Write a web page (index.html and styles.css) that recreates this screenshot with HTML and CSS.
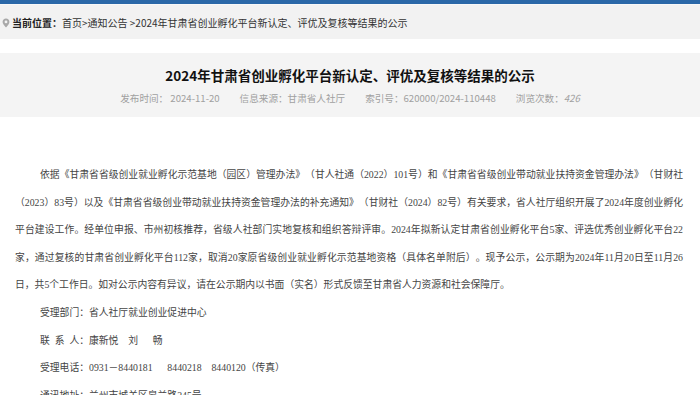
FILE: index.html
```html
<!DOCTYPE html>
<html lang="zh-CN">
<head>
<meta charset="utf-8">
<title>2024年甘肃省创业孵化平台新认定、评优及复核等结果的公示</title>
<link rel="stylesheet" href="styles.css">
</head>
<body>
<div class="topbar"></div>
<div class="crumbs">
  <svg class="pin" width="8" height="10" viewBox="0 0 8 10"><path d="M4 0.6C2 0.6 0.6 2.1 0.6 3.9C0.6 6.2 4 9.4 4 9.4C4 9.4 7.4 6.2 7.4 3.9C7.4 2.1 6 0.6 4 0.6Z" fill="#a8a8a8"/><circle cx="4" cy="3.9" r="1.4" fill="#f2f2f2"/></svg>
  <span class="crumbs-label">当前位置：</span>
  <span class="crumbs-path">首页&gt;通知公告 &gt;2024年甘肃省创业孵化平台新认定、评优及复核等结果的公示</span>
</div>
<div class="headbox">
  <h1 class="title">2024年甘肃省创业孵化平台新认定、评优及复核等结果的公示</h1>
  <div class="meta">
    <span>发布时间：&nbsp;2024-11-20</span>
    <span>信息来源：甘肃省人社厅</span>
    <span>索引号：620000/2024-110448</span>
    <span>浏览次数：<em class="views">426</em></span>
  </div>
</div>
<div class="content">
  <p class="para">依据《甘肃省省级创业就业孵化示范基地（园区）管理办法》（甘人社通（2022）101号）和《甘肃省省级创业带动就业扶持资金管理办法》（甘财社（2023）83号）以及《甘肃省省级创业带动就业扶持资金管理办法的补充通知》（甘财社（2024）82号）有关要求，省人社厅组织开展了2024年度创业孵化平台建设工作。经单位申报、市州初核推荐，省级人社部门实地复核和组织答辩评审。2024年拟新认定甘肃省创业孵化平台5家、评选优秀创业孵化平台22家，通过复核的甘肃省创业孵化平台112家，取消20家原省级创业就业孵化示范基地资格（具体名单附后）。现予公示，公示期为2024年11月20日至11月26日，共5个工作日。如对公示内容有异议，请在公示期内以书面（实名）形式反馈至甘肃省人力资源和社会保障厅。</p>
  <p class="contact">受理部门：省人社厅就业创业促进中心</p>
  <p class="contact">联&ensp;系&ensp;人：康新悦&ensp;&ensp;刘&ensp;&ensp;&ensp;畅</p>
  <p class="contact">受理电话：0931－8440181&ensp;&ensp;&ensp;8440218&ensp;&ensp;8440120（传真）</p>
  <p class="contact">通讯地址：兰州市城关区皋兰路245号</p>
</div>
</body>
</html>
```
FILE: styles.css
```css
html, body {
  margin: 0;
  padding: 0;
  background: #ffffff;
}
body {
  font-family: "Noto Sans CJK SC", sans-serif;
  color: #333;
  text-spacing-trim: space-all;
}
.topbar {
  height: 4px;
  background: #2b68a8;
}
.crumbs {
  height: 34px;
  background: #f2f2f2;
  border-top: 1px solid #f8f8f8;
  display: flex;
  align-items: center;
  padding-left: 2px;
  font-size: 10px;
  color: #333;
}
.pin {
  margin-right: 2px;
  margin-top: 1px;
}
.crumbs-label {
  font-weight: bold;
  color: #222;
}
.crumbs-path {
  color: #333;
}
.headbox {
  margin-top: 14px;
  background: #f4f4f4;
  padding: 12px 0 11px;
  text-align: center;
}
.title {
  margin: 0;
  font-size: 13.5px;
  line-height: 20px;
  font-weight: bold;
  color: #111;
}
.meta {
  margin-top: 5px;
  display: flex;
  justify-content: center;
  gap: 20px;
  font-size: 9.6px;
  line-height: 16px;
  color: #a0a0a0;
}
.views {
  font-style: italic;
}
.content {
  padding: 44px 17px 0 15px;
  font-family: "Liberation Serif", "Noto Sans CJK SC", serif;
  font-size: 9.8px;
  line-height: 27.6px;
  color: #444;
}
.para {
  margin: 0;
  text-indent: 25px;
  text-align: justify;
}
.contact {
  margin: 0;
  padding-left: 25px;
}
```
